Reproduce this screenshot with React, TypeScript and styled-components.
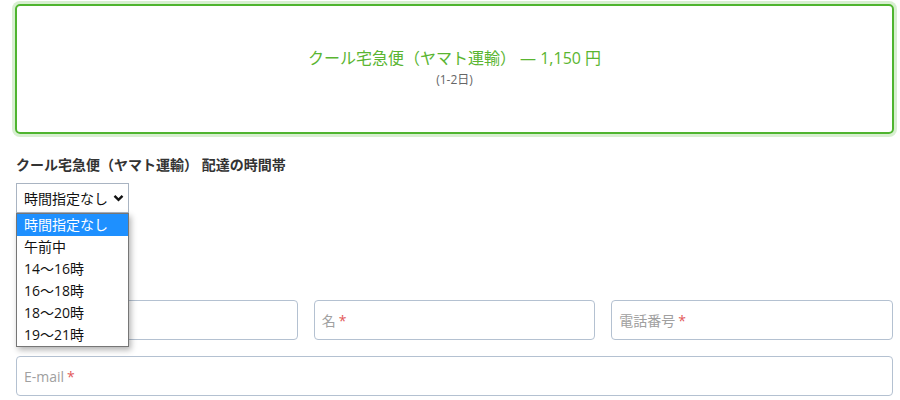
import styled, { createGlobalStyle } from 'styled-components';

const GlobalStyle = createGlobalStyle`
  body {
    margin: 0;
    background: #ffffff;
    font-family: "Open Sans", "Noto Sans CJK JP", sans-serif;
    color: #222222;
  }
`;

const Page = styled.div`
  padding: 4px 7px 0 16px;
  width: 900px;
  box-sizing: border-box;
`;

const ShippingCard = styled.div`
  margin: 0 -1px;
  height: 130px;
  box-sizing: border-box;
  border: 2px solid #4fb52f;
  border-radius: 5px;
  box-shadow: 0 0 0 3px rgba(79, 181, 47, 0.22);
  display: flex;
  flex-direction: column;
  align-items: center;
  justify-content: center;
`;

const CardTitle = styled.div`
  color: #5ab531;
  font-size: 16px;
  line-height: 22px;
`;

const CardSub = styled.div`
  color: #666666;
  font-size: 12px;
  line-height: 22px;
`;

const FieldLabel = styled.div`
  margin-top: 21px;
  font-size: 14px;
  font-weight: 700;
  color: #333333;
  line-height: 20px;
`;

const SelectWrap = styled.div`
  position: relative;
  margin-top: 8px;
  width: 113px;
`;

const SelectBox = styled.div`
  height: 30px;
  box-sizing: border-box;
  border: 1px solid #a9b4c2;
  display: flex;
  align-items: center;
  justify-content: space-between;
  padding: 0 4px 0 7px;
  font-size: 14px;
  color: #111111;
`;

const Menu = styled.div`
  position: absolute;
  top: 30px;
  left: 0;
  width: 113px;
  box-sizing: border-box;
  background: #ffffff;
  border: 1px solid #767676;
  box-shadow: 2px 3px 6px rgba(0, 0, 0, 0.3);
  z-index: 2;
`;

const Option = styled.div<{ $selected?: boolean }>`
  height: 22px;
  line-height: 22px;
  padding-left: 7px;
  font-size: 14px;
  color: ${({ $selected }) => ($selected ? '#ffffff' : '#111111')};
  background: ${({ $selected }) => ($selected ? '#1e90ff' : 'transparent')};
`;

const Fields = styled.div`
  margin-top: 87px;
  display: grid;
  grid-template-columns: repeat(3, 1fr);
  gap: 16px;
`;

const Input = styled.div<{ $wide?: boolean }>`
  grid-column: ${({ $wide }) => ($wide ? '1 / -1' : 'auto')};
  height: 40px;
  box-sizing: border-box;
  border: 1px solid #b4c1d1;
  border-radius: 4px;
  display: flex;
  align-items: center;
  padding-left: 7px;
  font-size: 14px;
  color: #a0a0a0;
`;

const Star = styled.span`
  color: #e2595a;
  margin-left: 3px;
`;

const options = ['時間指定なし', '午前中', '14～16時', '16～18時', '18～20時', '19～21時'];

const Chevron = () => (
  <svg width="11" height="8" viewBox="0 0 11 8">
    <path d="M1.5 1.8 L5.5 5.8 L9.5 1.8" fill="none" stroke="#111" strokeWidth="2.4" />
  </svg>
);

// placeholder of the first field sits under the open menu
const Field = ({ text, wide }: { text?: string; wide?: boolean }) => (
  <Input $wide={wide}>
    {text && (
      <>
        {text}
        <Star>*</Star>
      </>
    )}
  </Input>
);

export default function App() {
  return (
    <>
      <GlobalStyle />
      <Page>
        <ShippingCard>
          <CardTitle>クール宅急便（ヤマト運輸） — 1,150 円</CardTitle>
          <CardSub>(1-2日)</CardSub>
        </ShippingCard>

        <FieldLabel>クール宅急便（ヤマト運輸） 配達の時間帯</FieldLabel>

        <SelectWrap>
          <SelectBox>
            <span>時間指定なし</span>
            <Chevron />
          </SelectBox>
          <Menu>
            {options.map((o, i) => (
              <Option key={o} $selected={i === 0}>
                {o}
              </Option>
            ))}
          </Menu>
        </SelectWrap>

        <Fields>
          <Field />
          <Field text="名" />
          <Field text="電話番号" />
          <Field text="E-mail" wide />
        </Fields>
      </Page>
    </>
  );
}
